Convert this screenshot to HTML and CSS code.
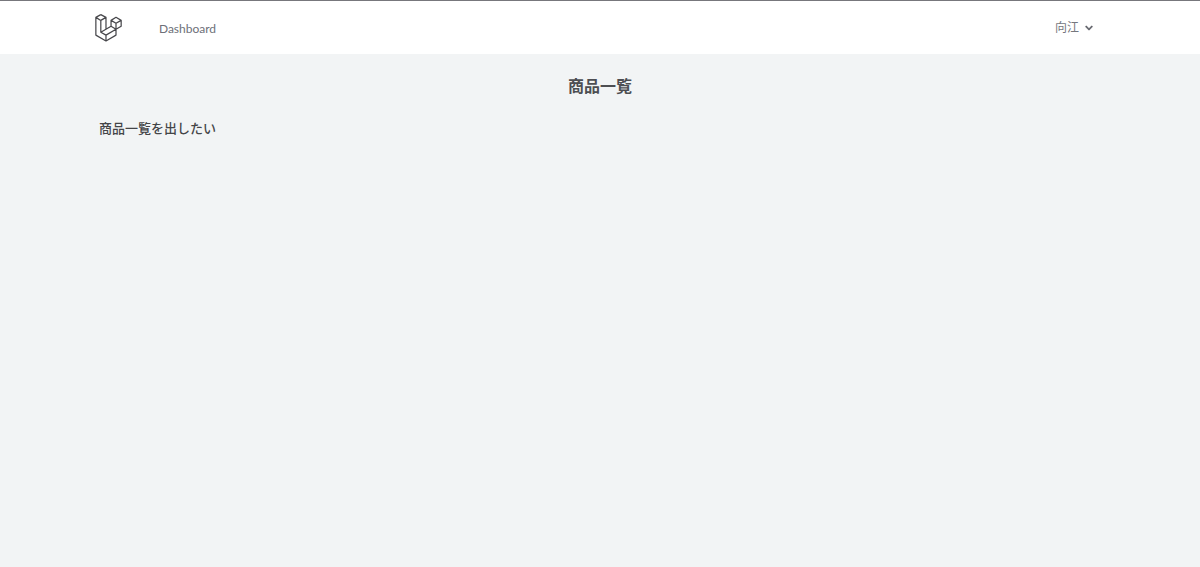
FILE: index.html
```html
<!DOCTYPE html>
<html lang="ja">
<head>
<meta charset="utf-8">
<meta name="viewport" content="width=device-width, initial-scale=1">
<title>商品一覧</title>
<link rel="stylesheet" href="styles.css">
</head>
<body>
<header class="navbar">
  <nav class="navbar-inner">
    <a class="logo" href="#" aria-label="Home">
      <svg viewBox="0 0 50 52" fill="none" stroke="currentColor" stroke-width="2.3" stroke-linejoin="round" aria-hidden="true">
        <path d="M10.8 1.2 1.6 6.3V39.2L20.4 50 39 39.2V28.3L48.6 22.7V11.8L39 6.2 29.8 11.8V22.7L10.8 33.8V11.9L1.6 6.3M10.8 1.2 20.4 6.3 10.8 11.9M20.4 6.3V28.3M29.8 11.8 39 17.3 48.6 11.8M39 17.3V28.3L29.8 22.7M39 28.3 20.4 39.2 10.8 33.8M20.4 39.2V50"/>
      </svg>
    </a>
    <a class="nav-link" href="#">Dashboard</a>
    <button class="user-menu" type="button">
      <span>向江</span>
      <svg class="chevron" viewBox="0 0 20 20" fill="currentColor" stroke="currentColor" stroke-width="0.5" aria-hidden="true">
        <path fill-rule="evenodd" clip-rule="evenodd" d="M5.293 7.293a1 1 0 011.414 0L10 10.586l3.293-3.293a1 1 0 111.414 1.414l-4 4a1 1 0 01-1.414 0l-4-4a1 1 0 010-1.414z"/>
      </svg>
    </button>
  </nav>
</header>
<main class="content">
  <h1 class="title">商品一覧</h1>
  <p class="message">商品一覧を出したい</p>
</main>
</body>
</html>
```
FILE: styles.css
```css
* {
  box-sizing: border-box;
}

body {
  margin: 0;
  min-height: 100vh;
  background: #f2f4f5;
  color: #444548;
  font-family: Lato, "Noto Sans CJK JP", sans-serif;
}

.navbar {
  background: #fff;
  border-top: 1px solid #77777c;
}

.navbar-inner {
  display: flex;
  align-items: center;
  max-width: 1064px;
  height: 53px;
  margin: 0 auto;
  padding: 0 27px;
}

.logo {
  display: flex;
  color: #47474b;
}

.logo svg {
  height: 28px;
}

.nav-link {
  margin-left: 37px;
  padding-top: 2px;
  color: #6d7078;
  font-size: 12px;
  line-height: 20px;
  text-decoration: none;
}

.user-menu {
  display: flex;
  align-items: center;
  gap: 3px;
  margin-left: auto;
  padding: 0 9px;
  border: 0;
  background: none;
  color: #75777e;
  font: inherit;
  font-size: 12px;
  line-height: 20px;
}

.chevron {
  width: 14px;
  height: 14px;
  color: #5f6168;
}

.content {
  max-width: 1064px;
  margin: 0 auto;
  padding: 20px 31px;
}

.title {
  margin: 0;
  color: #4d4e52;
  font-size: 16px;
  font-weight: 700;
  line-height: 24px;
  text-align: center;
}

.message {
  margin: 20px 0 0;
  font-size: 13px;
  font-weight: 500;
  line-height: 20px;
}
```
